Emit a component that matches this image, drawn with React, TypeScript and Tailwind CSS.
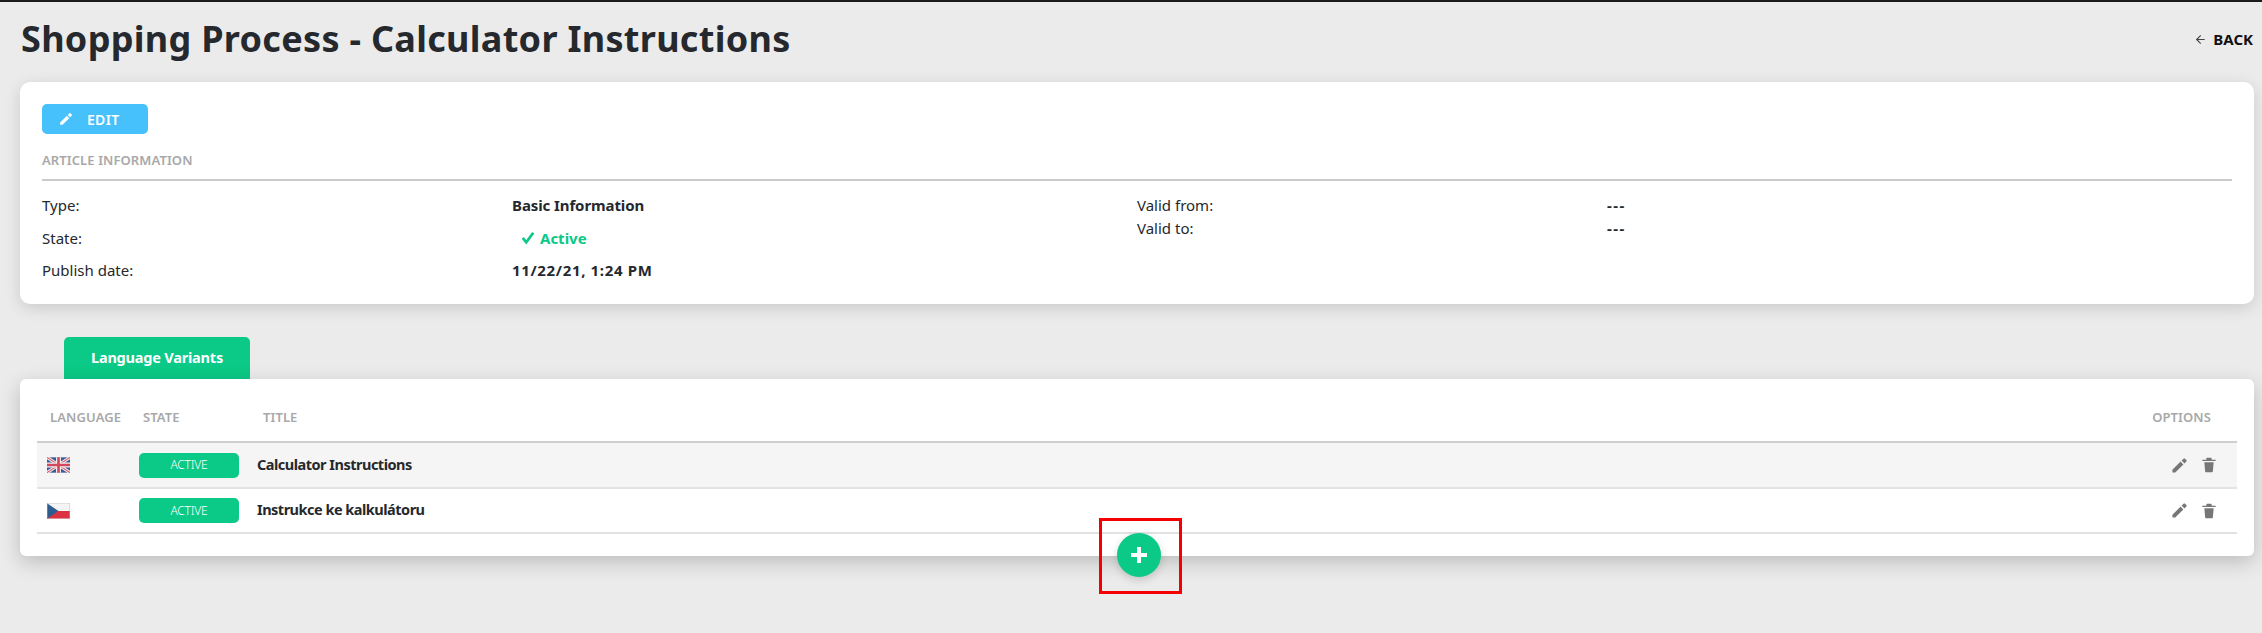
import { ArrowLeft } from 'lucide-react'

const PencilIcon = ({ className }: { className: string }) => (
  <svg viewBox="0 0 24 24" className={className} fill="currentColor">
    <path d="M2 18v4h4L17.500 10.500l-4-4L2 18zM21.700 6.300a1.400 1.400 0 0 0 0-2l-2-2a1.400 1.400 0 0 0-2 0L15 5l4 4 2.700-2.700z" />
  </svg>
)

const TrashIcon = ({ className }: { className: string }) => (
  <svg viewBox="0 0 24 24" className={className} fill="currentColor">
    <path d="M5 8h14l-1.200 13.500c-.1.800-.7 1.500-1.500 1.500H7.700c-.8 0-1.400-.7-1.500-1.500L5 8zM22 6H2V4h6V2.500C8 1.700 8.700 1 9.500 1h5c.8 0 1.500.7 1.500 1.500V4h6v2z" />
  </svg>
)

const FlagUK = () => (
  <svg viewBox="0 0 60 40" className="h-4 w-[23px]">
    <rect width="60" height="40" fill="#3d5a98" />
    <path d="M0 0L60 40M60 0L0 40" stroke="#f3eef0" strokeWidth="8" />
    <path d="M0 0L60 40M60 0L0 40" stroke="#d5626f" strokeWidth="3" />
    <path d="M30 0V40M0 20H60" stroke="#f3eef0" strokeWidth="13" />
    <path d="M30 0V40M0 20H60" stroke="#d2485a" strokeWidth="7" />
  </svg>
)

const FlagCZ = () => (
  <svg viewBox="0 0 60 40" className="h-4 w-[23px]">
    <rect width="60" height="20" fill="#f4f4f4" />
    <rect y="20" width="60" height="20" fill="#dc3140" />
    <path d="M0 0L30 20L0 40Z" fill="#2f5c8f" />
    <rect x="0.500" y="0.500" width="59" height="39" fill="none" stroke="#bbbbbb" />
  </svg>
)

const variants = [
  { flag: <FlagUK />, title: 'Calculator Instructions', rowClass: 'h-[46px] bg-[#f5f5f5]' },
  { flag: <FlagCZ />, title: 'Instrukce ke kalkulátoru', rowClass: 'h-[45px] bg-white' },
]

const labelClass = 'text-[13px] leading-none font-semibold tracking-[0.1px] text-[#a8a8a8]'

export default function App() {
  return (
    <div className="relative h-[633px] w-[2262px] overflow-hidden border-t-2 border-[#1b1b1b] bg-[#ebebeb] font-['Noto_Sans',sans-serif] text-[#25282d]">
      {/* Page header */}
      <div className="flex h-[80px] items-center justify-between pr-[9px] pb-[6px] pl-[21px]">
        <h1 className="text-[36px] leading-none font-bold tracking-[0.3px]">Shopping Process - Calculator Instructions</h1>
        <a className="flex items-center gap-[6px] text-[15px] font-bold text-[#111]">
          <ArrowLeft className="h-[13px] w-[13px] text-[#444]" />
          BACK
        </a>
      </div>

      {/* Article information */}
      <section className="mr-[8px] ml-[20px] h-[222px] rounded-[10px] bg-white px-[22px] pt-[22px] shadow-[0_4px_16px_rgba(0,0,0,0.14)]">
        <button className="flex h-[30px] w-[106px] items-center gap-[14px] rounded-[5px] bg-[#47c1fb] pl-[17px] text-[14px] font-semibold tracking-[0.3px] text-white">
          <PencilIcon className="h-[14px] w-[14px]" />
          EDIT
        </button>
        <div className={`${labelClass} mt-[20px] h-[27px] border-b-2 border-[#cbcbcb]`}>ARTICLE INFORMATION</div>
        <div className="mt-[14px] grid grid-cols-[470px_625px_470px_1fr] text-[15px] leading-5">
          <div className="flex flex-col gap-[12.500px]">
            <span>Type:</span>
            <span>State:</span>
            <span>Publish date:</span>
          </div>
          <div className="flex flex-col gap-[12.500px] font-bold">
            <span className="tracking-[-0.1px]">Basic Information</span>
            <span className="flex items-center gap-[5px] pl-[9px] text-[#0bc986]">
              <svg viewBox="0 0 16 16" className="h-[15px] w-[14px]" fill="none" stroke="currentColor" strokeWidth="3">
                <path d="M2 8.500L6 13.500L14 2.500" />
              </svg>
              Active
            </span>
            <span className="tracking-[0.65px]">11/22/21, 1:24 PM</span>
          </div>
          <div className="flex flex-col gap-[3px]">
            <span>Valid from:</span>
            <span>Valid to:</span>
          </div>
          <div className="flex flex-col gap-[3px] font-bold tracking-[1.5px]">
            <span>---</span>
            <span>---</span>
          </div>
        </div>
      </section>

      {/* Tabs */}
      <div className="mt-[33px] ml-[64px] flex h-[42px] w-[186px] items-center justify-center rounded-t-[5px] bg-[#0bc986] text-[14.500px] font-bold tracking-[-0.2px] text-white">
        Language Variants
      </div>

      {/* Language variants table */}
      <section className="mr-[8px] ml-[20px] h-[177px] rounded-[6px] bg-white px-[17px] pt-[16px] shadow-[0_6px_20px_rgba(0,0,0,0.2)]">
        <div className={`${labelClass} flex h-[48px] items-center justify-between border-b-2 border-[#cfcfcf] pr-[26px] pb-[2px]`}>
          <div className="flex">
            <span className="w-[106px] pl-[13px]">LANGUAGE</span>
            <span className="w-[120px]">STATE</span>
            <span>TITLE</span>
          </div>
          <span>OPTIONS</span>
        </div>
        {variants.map((row) => (
          <div key={row.title} className={`${row.rowClass} flex items-center border-b-2 border-[#e2e2e2] pr-[20px] pl-[10px]`}>
            <span className="w-[92px]">{row.flag}</span>
            <span className="flex h-[25px] w-[100px] items-center justify-center rounded-[5px] bg-[#0bc986] text-[12px] font-light tracking-[-0.2px] text-white">ACTIVE</span>
            <span className="ml-[18px] pb-[1px] text-[14.500px] font-bold tracking-[-0.5px]">{row.title}</span>
            <span className="ml-auto flex items-center gap-[13px] text-[#777]">
              <PencilIcon className="h-[17px] w-[17px]" />
              <TrashIcon className="h-[16px] w-[16px]" />
            </span>
          </div>
        ))}
      </section>

      {/* Add button with red callout */}
      <button className="absolute top-[531px] left-[1117px] flex h-[44px] w-[44px] items-center justify-center rounded-full bg-[#0bc986] shadow-[0_3px_8px_rgba(0,0,0,0.16)]">
        <svg viewBox="0 0 16 16" className="h-4 w-4" fill="none" stroke="white" strokeWidth="4">
          <path d="M8 0V16M0 8H16" />
        </svg>
      </button>
      <div className="absolute top-[516px] left-[1099px] h-[76px] w-[83px] border-[3px] border-[#f50000]" />
    </div>
  )
}
